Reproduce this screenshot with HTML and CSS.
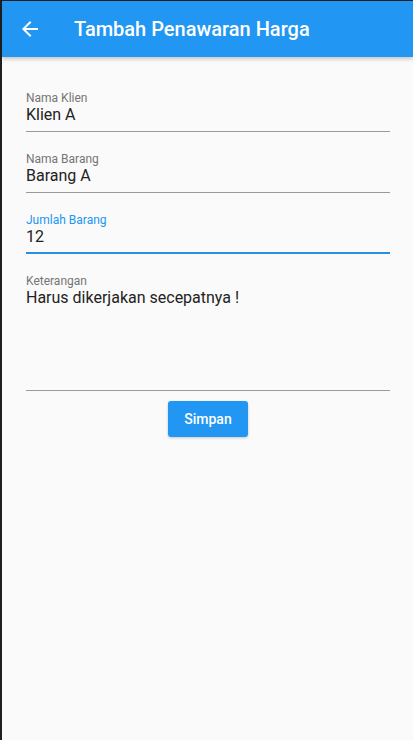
FILE: index.html
```html
<!DOCTYPE html>
<html lang="id">
<head>
<meta charset="utf-8">
<title>Tambah Penawaran Harga</title>
<link rel="stylesheet" href="styles.css">
</head>
<body>
<div class="screen">
  <header class="app-bar">
    <button class="back" aria-label="Kembali">
      <svg viewBox="0 0 24 24" width="24" height="24"><path fill="#fff" d="M20 11H7.83l5.59-5.59L12 4l-8 8 8 8 1.41-1.41L7.83 13H20v-2z"/></svg>
    </button>
    <h1 class="title">Tambah Penawaran Harga</h1>
  </header>
  <main class="form">
    <div class="field">
      <div class="label">Nama Klien</div>
      <div class="value">Klien A</div>
    </div>
    <div class="field">
      <div class="label">Nama Barang</div>
      <div class="value">Barang A</div>
    </div>
    <div class="field focused">
      <div class="label">Jumlah Barang</div>
      <div class="value">12</div>
    </div>
    <div class="field multiline">
      <div class="label">Keterangan</div>
      <div class="value">Harus dikerjakan secepatnya !</div>
    </div>
    <div class="actions">
      <button class="btn">Simpan</button>
    </div>
  </main>
</div>
</body>
</html>
```

FILE: styles.css
```css
* { box-sizing: border-box; }
html, body { margin: 0; padding: 0; }
body {
  font-family: Roboto, "Noto Sans", sans-serif;
  background: #1f1f1f;
}
.screen {
  min-height: 740px;
  margin-top: 1px;
  margin-left: 2px;
  background: #fafafa;
  min-height: 739px;
}
.app-bar {
  height: 56px;
  background: #2196f3;
  display: flex;
  align-items: center;
  box-shadow: 0 2px 4px rgba(0,0,0,0.22);
  position: relative;
}
.back {
  width: 24px;
  height: 24px;
  margin-left: 16px;
  padding: 0;
  border: 0;
  background: none;
  display: flex;
}
.title {
  margin: 0 0 0 32px;
  font-size: 20px;
  font-weight: 500;
  line-height: 20px;
  color: #fff;
}
.form {
  padding: 14px 23px 0 24px;
}
.field {
  padding-top: 21px;
}
.label {
  font-size: 12px;
  line-height: 13px;
  color: #757575;
}
.value {
  font-size: 16px;
  line-height: 20px;
  color: #222;
  padding-bottom: 6px;
  border-bottom: 1px solid #9a9a9a;
}
.focused .label { color: #2196f3; }
.focused .value {
  padding-bottom: 5px;
  border-bottom: 2px solid #2b8fdc;
}
.multiline .value {
  min-height: 103px;
}
.actions {
  display: flex;
  justify-content: center;
  padding-top: 10px;
}
.btn {
  width: 80px;
  height: 36px;
  border: 0;
  border-radius: 3px;
  background: #2196f3;
  color: #fff;
  font-family: Roboto, sans-serif;
  font-size: 14px;
  font-weight: 500;
  box-shadow: 0 1px 3px rgba(0,0,0,0.2);
}
```
